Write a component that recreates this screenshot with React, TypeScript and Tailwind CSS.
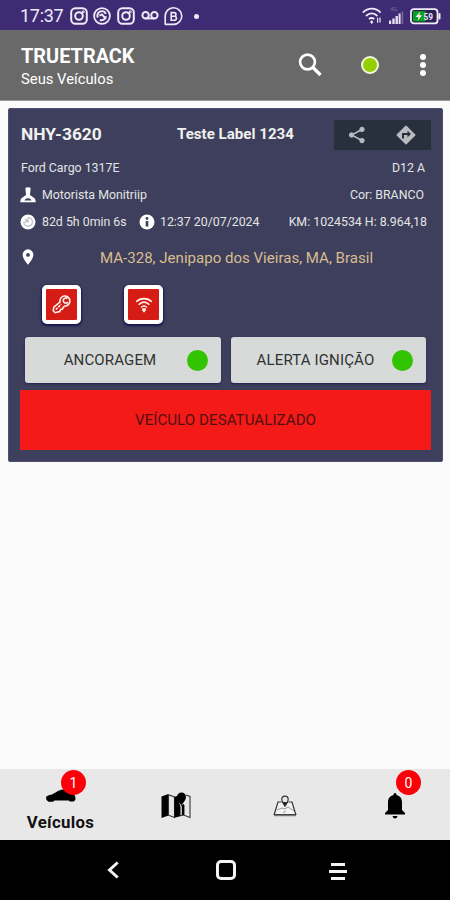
import type { ReactNode } from "react";

function InstagramGlyph() {
  return (
    <svg width="18" height="18" viewBox="0 0 18 18" fill="none" stroke="#efeaf8" strokeWidth="2">
      <rect x="1.2" y="1.2" width="15.6" height="15.6" rx="4.2" />
      <circle cx="9" cy="9" r="3.8" />
      <circle cx="13.2" cy="4.8" r="0.5" />
    </svg>
  );
}

function StatusBar() {
  return (
    <div className="flex h-[30px] items-center bg-[#3f2b73] pl-5 pr-[9px] pt-[2px] text-[#efeaf8]">
      <span className="w-[50px] whitespace-nowrap text-[18px] leading-none tracking-[-0.3px]">17:37</span>
      <InstagramGlyph />
      <svg className="ml-[5px]" width="18" height="18" viewBox="0 0 18 18" fill="none" stroke="#efeaf8">
        <circle cx="9" cy="9" r="7.9" strokeWidth="1.8" />
        <path d="M4.8 10.500A4.400 4.400 0 0 1 12.800 6.800M6.400 8.600l2.600-1.200 4 4.800M6.800 12.800c2.600 1.200 5.600-.4 6.200-3.600" strokeWidth="2" />
      </svg>
      <div className="ml-[6px]"><InstagramGlyph /></div>
      <svg className="ml-[6px]" width="18" height="18" viewBox="0 0 18 18" fill="none" stroke="#efeaf8" strokeWidth="2">
        <circle cx="4.6" cy="8.200" r="3.200" />
        <circle cx="13.4" cy="8.200" r="3.200" />
        <path d="M4.6 11.400h8.8" />
      </svg>
      <svg className="ml-[5px]" width="19" height="19" viewBox="0 0 19 19" fill="none" stroke="#efeaf8">
        <path d="M1.2 17.8V9.4A8.3 8.3 0 1 1 9.5 17.4H1.2" strokeWidth="1.6" />
        <path d="M7.2 5.6h2.9a1.8 1.8 0 0 1 0 3.7H7.2zM7.2 9.3h3.2a2 2 0 0 1 0 4H7.2z" strokeWidth="1.6" />
      </svg>
      <span className="ml-[11px] h-[5px] w-[5px] rounded-full bg-[#efeaf8]" />
      <svg className="ml-auto" width="20" height="18" viewBox="0 0 20 18" fill="none" stroke="#efeaf8" strokeWidth="1.8">
        <path d="M.8 5.600C6 .4 13.600.4 18.600 5.600M4 9c3.400-3.400 8-3.400 11.400 0M7 12.200c1.600-1.600 3.600-1.600 5.200 0" />
        <path d="M9.700 13.200l1.700 1.900-1.700 1.900L8 15.100z" fill="#efeaf8" stroke="none" />
        <path d="M15.600 10.800v5M18 10.400v5" strokeWidth="1.200" />
      </svg>
      <svg className="ml-[7px]" width="15" height="20" viewBox="0 0 15 20" fill="#e6e0f2">
        <rect x="0" y="14.500" width="2.200" height="3.500" />
        <rect x="3.300" y="12.500" width="2.400" height="5.500" />
        <rect x="6.500" y="10" width="2.400" height="8" />
        <rect x="9.600" y="7.500" width="2" height="10.500" />
        <rect x="12.600" y="5.500" width="1.600" height="12.500" fill="#76679b" />
        <text x="1" y="5" fontSize="6" fill="#78699f" fontFamily="Roboto, sans-serif">4G</text>
      </svg>
      <svg className="ml-[6px]" width="31" height="17" viewBox="0 0 31 17">
        <rect x="1" y="1.200" width="26.500" height="14.200" rx="3" fill="#2b2159" stroke="#f1edf8" strokeWidth="1.800" />
        <path d="M3 3.200h12.600v10.200H3z" fill="#08a31b" />
        <rect x="28.500" y="5" width="2" height="6.500" rx="1" fill="#f1edf8" />
        <path d="M10.300 3.500L5.500 9h3l-1 4 4.600-5.700H9.300z" fill="#f1edf8" />
        <text x="13.600" y="12" fontSize="9.500" fontWeight="700" fill="#e8e4f2" fontFamily="Roboto, sans-serif" textLength="9.500" lengthAdjust="spacingAndGlyphs">59</text>
      </svg>
    </div>
  );
}

function Header() {
  return (
    <header className="flex h-[71px] items-center border-b border-[#9a9898] bg-[#696969] pl-[21px] pr-[22px] text-white">
      <div className="w-[277px] whitespace-nowrap pt-[4px]">
        <div className="text-[19.900px] font-bold leading-[24px]">TRUETRACK</div>
        <div className="text-[14.800px] leading-[20px]">Seus Veículos</div>
      </div>
      <svg width="24" height="24" viewBox="0 0 24 24" fill="none" stroke="#fff">
        <circle cx="9.500" cy="9" r="7.400" strokeWidth="2.600" />
        <path d="M14.500 14L22.500 22" strokeWidth="3.200" />
      </svg>
      <span className="ml-[39px] h-[18px] w-[18px] rounded-full border-2 border-[#f2f7df] bg-[#95cf00]" />
      <div className="ml-auto flex w-[10px] flex-col items-center gap-[2px]">
        <span className="h-[6px] w-[6px] rounded-full bg-white" />
        <span className="h-[6px] w-[6px] rounded-full bg-white" />
        <span className="h-[6px] w-[6px] rounded-full bg-white" />
      </div>
    </header>
  );
}

function ActionButton({ label }: { label: string }) {
  return (
    <button className="flex h-[46px] min-w-0 flex-1 items-center rounded-[3px] bg-[#d7dad8] pl-[9px] pr-[13px] text-[15px] text-[#303232] shadow-[0_1px_2px_#23234a]">
      <span className="w-[152px] whitespace-nowrap text-center tracking-[0.150px]">{label}</span>
      <span className="ml-auto h-[21px] w-[21px] shrink-0 rounded-full bg-[#32c400]" />
    </button>
  );
}

function StateTile({ children }: { children: ReactNode }) {
  return (
    <div className="flex h-[39px] w-[39px] items-center justify-center rounded-[5px] border-[4px] border-white bg-[#d51d15] shadow-[0_1px_2px_1px_#181750]">
      {children}
    </div>
  );
}

function VehicleCard() {
  return (
    <section className="flex h-[354px] flex-col rounded-[2px] border border-[#4f4f70] bg-[#3e3f5c] pl-[11px] pr-[11px] pt-[11px] text-[12.350px] text-[#e4e4e4]">
      <div className="flex h-[30px] items-center">
        <span className="w-[157px] whitespace-nowrap pb-px pl-px text-[17.400px] font-bold leading-none text-[#f0f0ee]">NHY-3620</span>
        <span className="whitespace-nowrap text-[15.100px] font-bold leading-none text-[#f0f0ee]">Teste Label 1234</span>
        <div className="ml-auto flex h-[30px] w-[97px] items-center bg-[#27303c] pl-[14px] pr-[15px]">
          <svg width="18" height="18" viewBox="0 0 18 18" fill="#b7bcc0" stroke="#b7bcc0">
            <path d="M14 3.500L3.500 9 14 14.500" fill="none" strokeWidth="1.500" />
            <circle cx="14" cy="3.400" r="2.200" />
            <circle cx="3.500" cy="9" r="2.200" />
            <circle cx="14" cy="14.600" r="2.200" />
          </svg>
          <svg className="ml-auto" width="20" height="20" viewBox="0 0 20 20">
            <path d="M10 1.200L18.800 10 10 18.800 1.200 10z" fill="#b7bcc0" stroke="#b7bcc0" strokeWidth="1.500" strokeLinejoin="round" />
            <path d="M7 13.500V9h5" fill="none" stroke="#27303c" strokeWidth="2" />
            <path d="M11.500 5.800L15 9l-3.500 3.200z" fill="#27303c" />
          </svg>
        </div>
      </div>
      <div className="flex h-[35px] items-center justify-between pl-px pr-[6px] pt-px">
        <span>Ford Cargo 1317E</span>
        <span>D12 A</span>
      </div>
      <div className="flex h-[20px] items-center pr-[7px]">
        <svg className="mr-[6px]" width="16" height="16" viewBox="0 0 16 16" fill="#fff">
          <path fillRule="evenodd" d="M5.400 .800Q8-.400 10.600 .800L10.300 5 10 7V8L14.600 11.300Q15.900 13 15.600 15.200H.400Q.100 13 1.400 11.300L6 8V7L5.700 5zM4.400 13.400H11.600Q10.800 11.200 8 11.200T4.400 13.400" />
        </svg>
        <span>Motorista Monitriip</span>
        <span className="ml-auto">Cor: BRANCO</span>
      </div>
      <div className="flex h-[34px] items-center whitespace-nowrap pr-[4px]">
        <svg className="mr-[6px]" width="16" height="16" viewBox="0 0 16 16">
          <circle cx="8" cy="8" r="7.500" fill="#fff" />
          <path d="M8 3.500V8H3.800A4.300 4.300 0 1 0 8 3.500M8 8L5 5" fill="none" stroke="#b9b9c2" strokeWidth="1.200" />
        </svg>
        <span className="w-[97px]">82d 5h 0min 6s</span>
        <svg className="mr-[5px]" width="16" height="16" viewBox="0 0 16 16">
          <circle cx="8" cy="8" r="7.500" fill="#fff" />
          <circle cx="8" cy="4.500" r="1.400" fill="#3e3f5c" />
          <path d="M8 7v5.500" stroke="#3e3f5c" strokeWidth="2.600" />
        </svg>
        <span>12:37 20/07/2024</span>
        <span className="ml-auto">KM: 1024534 H: 8.964,18</span>
      </div>
      <div className="flex h-[36px] items-center">
        <svg className="ml-[2px]" width="12" height="16" viewBox="0 0 12 16">
          <path fillRule="evenodd" d="M6 .3A5.400 5.400 0 0 0 .6 5.700C.6 9.600 6 15.700 6 15.700s5.400-6.100 5.400-10A5.400 5.400 0 0 0 6 .3M6 4a1.900 1.900 0 1 1 0 3.800A1.900 1.900 0 0 1 6 4" fill="#fff" />
        </svg>
        <span className="ml-[66px] whitespace-nowrap pt-[2px] text-[15.050px] text-[#d9bd8f]">MA-328, Jenipapo dos Vieiras, MA, Brasil</span>
      </div>
      <div className="flex h-[62px] items-center gap-[43px] pb-[3px] pl-[22px]">
        <StateTile>
          <svg width="21" height="21" viewBox="0 0 21 21" fill="none" stroke="#fff3ee" strokeWidth="1.600">
            <path d="M9 8A5 5 0 1 1 14 12l-1.500 1-1 2-1.800.5-1 2-4.500 1.200-2-2 .6-3.500z" />
            <path d="M16.500 4.500A2.600 2.600 0 1 0 17 8" />
            <path d="M4.800 15.500l5.500-5.300" strokeDasharray="2.500 1" />
          </svg>
        </StateTile>
        <StateTile>
          <svg width="18" height="18" viewBox="0 0 18 18" fill="none" stroke="#fff3ee" strokeWidth="1.600">
            <path d="M1.200 5.800C5.500 1.500 12.500 1.500 16.800 5.800M3.600 8.700C7 5.400 11 5.400 14.400 8.700M6.200 11.300c1.800-1.700 3.800-1.700 5.600 0" />
            <path d="M7.200 12.200h3.600v2L9 16.800l-1.800-2.600z" fill="#fff3ee" stroke="none" />
          </svg>
        </StateTile>
      </div>
      <div className="flex gap-[10px] px-[5px]">
        <ActionButton label="ANCORAGEM" />
        <ActionButton label="ALERTA IGNIÇÃO" />
      </div>
      <div className="mt-[7px] flex h-[60px] items-center justify-center bg-[#f41a18] text-[15.100px] tracking-[0.050px] text-[#521010]">
        VEÍCULO DESATUALIZADO
      </div>
    </section>
  );
}

function Badge({ value, place }: { value: string; place: string }) {
  return (
    <span className={`absolute ${place} flex h-[25px] w-[25px] items-center justify-center rounded-full bg-[#fb0008] pt-px text-[14px] text-white`}>
      {value}
    </span>
  );
}

function BottomNav() {
  return (
    <nav className="flex h-[71px] bg-[#e8e8e8] text-black">
      <div className="relative flex w-[121px] flex-col items-center pt-[20px]">
        <svg width="30" height="13" viewBox="0 0 30 13" fill="#000">
          <path d="M0 8.500Q.5 6.500 6 5.500L12 2Q17-.500 23 1.200L28 5.500Q30 7.500 29.300 11L27.500 12.500H24L22.500 11.500H8.500L7 12.800H2.500L.5 11z" />
        </svg>
        <span className="mt-[9px] text-[16.800px] font-bold leading-[22px] tracking-[0.300px] text-[#111]">Veículos</span>
        <Badge value="1" place="left-[61px] top-[1px]" />
      </div>
      <div className="flex w-[109px] justify-center pt-[23px]">
        <svg width="30" height="27" viewBox="0 0 30 27">
          <path d="M.5 4.500L7.500 2v21.500L.5 26z" fill="#000" />
          <path d="M7.500 2.800L13.500 5V25.500L7.500 23.200zM23 13V23.200L29 25.500V4.500L25 3" fill="#e8e8e8" stroke="#333" strokeWidth="1.100" />
          <path d="M13.500 5l3.500-1.500L20.500 13l2.500-1V23.200L13.500 25.700z" fill="#000" />
          <path d="M17.800 9l3 5.500v8.500l-1.300.5V15z" fill="#e8e8e8" />
          <path d="M20.500 .500A4.500 4.500 0 0 0 16 5C16 8.300 20.500 13 20.500 13S25 8.300 25 5A4.500 4.500 0 0 0 20.500.500" fill="#000" />
        </svg>
      </div>
      <div className="flex w-[110px] justify-center pt-[26px]">
        <svg width="24" height="22" viewBox="0 0 24 22" fill="none" stroke="#333" strokeWidth="1.200">
          <path d="M8.500 7H5L1.200 19.500H22.800L19 7H15.500" fill="#f3f3f3" />
          <path d="M1 20.500H23" stroke="#777" strokeWidth="1.400" />
          <path d="M4 15l5-2 3 1 3-2 6 4M10 18l3-2" stroke="#999" strokeWidth="1" />
          <path d="M12 10.800C9.500 7.500 8.800 6 8.800 4.300a3.200 3.200 0 0 1 6.400 0C15.200 6 14.500 7.500 12 10.800z" fill="#e8e8e8" />
          <path d="M10 7.500h4L12 11z" fill="#111" />
        </svg>
      </div>
      <div className="relative flex w-[110px] justify-center pt-[24px]">
        <svg width="22" height="26" viewBox="0 0 22 26" fill="#000">
          <path d="M11 0q1.500 0 1.700 2.300C16.500 3 18 6 18 9.500V17L21 20v1.500H1V20l3-3V9.500C4 6 5.500 3 9.300 2.300 9.500 0 11 0 11 0M8.500 23h5q-.5 2.500-2.500 2.500T8.500 23" />
        </svg>
        <Badge value="0" place="left-[56px] top-[1px]" />
      </div>
    </nav>
  );
}

function SystemNav() {
  return (
    <div className="flex h-[60px] items-center bg-black">
      <div className="flex w-[225px] justify-center">
        <svg width="14" height="20" viewBox="0 0 14 20" fill="none" stroke="#f4f4f4" strokeWidth="3">
          <path d="M11.700 2.500L3.500 10l8.200 7.500" />
        </svg>
      </div>
      <span className="ml-[-9px] h-[20px] w-[20px] rounded-[5px] border-[3px] border-[#f4f4f4]" />
      <div className="ml-[93px] flex w-[18px] flex-col items-center gap-[4px] pt-[2px]">
        <span className="h-[3px] w-[14px] bg-[#f4f4f4]" />
        <span className="h-[3px] w-[18px] bg-[#f4f4f4]" />
        <span className="h-[3px] w-[14px] bg-[#f4f4f4]" />
      </div>
    </div>
  );
}

export default function App() {
  return (
    <div className="flex h-[900px] w-[450px] flex-col overflow-hidden bg-[#fbfbfb] font-[Roboto,sans-serif]">
      <StatusBar />
      <Header />
      <main className="flex-1 pl-[8px] pr-[7px] pt-[7px]">
        <VehicleCard />
      </main>
      <BottomNav />
      <SystemNav />
    </div>
  );
}
